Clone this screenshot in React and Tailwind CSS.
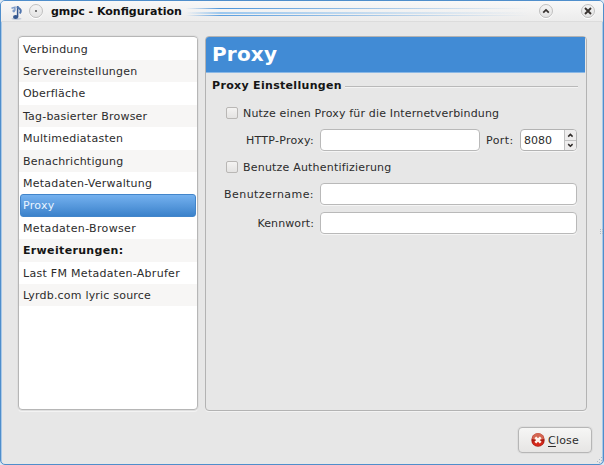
const items = [
  { label: "Verbindung", track: "tracking-[0.2px]" },
  { label: "Servereinstellungen", track: "tracking-[0.22px]" },
  { label: "Oberfläche", track: "tracking-[0.2px]" },
  { label: "Tag-basierter Browser", track: "tracking-[0.2px]" },
  { label: "Multimediatasten", track: "tracking-[0.27px]" },
  { label: "Benachrichtigung", track: "tracking-[0.22px]" },
  { label: "Metadaten-Verwaltung", track: "tracking-[0.24px]" },
  { label: "Proxy", track: "tracking-[0.3px]", selected: true },
  { label: "Metadaten-Browser", track: "tracking-[0.34px]" },
  { label: "Erweiterungen:", track: "tracking-[0.34px]", heading: true },
  { label: "Last FM Metadaten-Abrufer", track: "tracking-[0.29px]" },
  { label: "Lyrdb.com lyric source", track: "tracking-[0.2px]" },
];

function NoteIcon() {
  return (
    <svg className="ml-[9px] mt-[4px] h-[16px] w-[14px] shrink-0" viewBox="0 0 14 16">
      <ellipse cx="6.5" cy="13.8" rx="5" ry="1.1" fill="#c3ccda" />
      <path d="M7.6 12.2V1" fill="none" stroke="#34578f" strokeWidth="1.5" />
      <path d="M7.2 1.5c1 2 3.6 2.2 3.6 4.2 0 1.2-.4 2-1 2.8" fill="none" stroke="#4f74ad" strokeWidth="2" />
      <ellipse cx="5.6" cy="12" rx="2.6" ry="2" fill="#34578f" />
      <path d="M1.5 3.2l3.4-.9v3.4" fill="none" stroke="#7d9bc8" strokeWidth="1.5" />
      <circle cx="3.8" cy="6" r="1.4" fill="#7d9bc8" />
    </svg>
  );
}

function RoundButton({ children, className = "" }) {
  return (
    <span
      className={`flex h-[14px] w-[14px] shrink-0 items-center justify-center rounded-full border border-[#bfbfbf] bg-linear-to-b from-[#f4f4f4] to-[#e4e4e4] shadow-[0_1px_0_#ffffff] ${className}`}
    >
      {children}
    </span>
  );
}

function TitleBar() {
  return (
    <div className="flex h-[21px] shrink-0 border-b border-[#dcdcdc] bg-linear-to-b from-[#f8f8f8] to-[#ececec]">
      <NoteIcon />
      <RoundButton className="ml-[5px] mt-[3px]">
        <span className="h-[2px] w-[2px] bg-[#777777]" />
      </RoundButton>
      <span className="ml-[8px] mt-[2px] w-[132px] shrink-0 text-[11px] leading-[17px] font-bold text-[#111111]">
        gmpc - Konfiguration
      </span>
      <span className="ml-[3px] mt-[7px] flex flex-1 flex-col">
        <span className="h-px bg-linear-to-r from-transparent via-[#4b94da] via-10% to-transparent" />
        <span className="mt-[3px] h-[2px] bg-linear-to-r from-transparent via-[#9cc8ef] via-10% to-transparent" />
        <span className="mt-px h-px bg-linear-to-r from-transparent via-[#5b9fdf] via-10% to-transparent" />
      </span>
      <RoundButton className="ml-[10px] mt-[3px]">
        <svg className="h-[12px] w-[12px]" viewBox="0 0 12 12">
          <path d="M3.2 7.6L6 4.9l2.8 2.7" fill="none" stroke="#383330" strokeWidth="1.8" />
        </svg>
      </RoundButton>
      <RoundButton className="ml-[28px] mr-[8px] mt-[3px]">
        <svg className="h-[12px] w-[12px]" viewBox="0 0 12 12">
          <path d="M3 3l6 6M9 3l-6 6" fill="none" stroke="#383330" strokeWidth="1.9" />
        </svg>
      </RoundButton>
    </div>
  );
}

function Sidebar() {
  return (
    <div className="h-[374px] w-[180px] shrink-0 overflow-hidden rounded-[4px] border border-[#b6b6b6] bg-white pt-[0.6px] shadow-[0_0_0_1px_#dfdfdf,0_2px_0_#f3f3f3]">
      {items.map((item, i) => (
        <div
          key={item.label}
          className={`h-[22.4px] whitespace-nowrap ${item.track} ${
            item.selected
              ? "mx-px rounded-[3px] border border-[#4285ca] bg-linear-to-b from-[#74b1ef] to-[#3b82cb] pl-[2px] leading-[21px] text-[#e9f4ff]"
              : `pl-[4px] leading-[23px] ${i % 2 ? "bg-[#f7f6f5]" : "bg-white"}`
          } ${item.heading ? "font-bold text-[#151515]" : ""}`}
        >
          {item.label}
        </div>
      ))}
    </div>
  );
}

function Field({ className = "" }) {
  return (
    <span
      className={`block h-[22px] shrink-0 rounded-[4px] border border-[#b9b9b9] bg-white shadow-[0_1px_0_#f5f5f5] ${className}`}
    />
  );
}

function CheckRow({ label, track, className = "" }) {
  return (
    <div className={`flex h-[14px] items-center pl-[20px] ${className}`}>
      <span className="h-[12px] w-[12px] shrink-0 rounded-[2px] border border-[#b9b7b5] bg-linear-to-b from-[#f4f3f2] to-[#e4e3e2]" />
      <span className={`ml-[5px] pt-[2px] whitespace-nowrap ${track}`}>{label}</span>
    </div>
  );
}

function Spinner() {
  return (
    <span className="ml-[5px] flex h-[22px] w-[57px] shrink-0 overflow-hidden rounded-[4px] border border-[#b3b3b3] bg-white shadow-[0_1px_0_#f5f5f5]">
      <span className="w-[44px] pl-[3px] leading-[22px]">8080</span>
      <span className="flex flex-1 flex-col border-l border-[#c2c2c2] bg-[#eeeded]">
        <svg className="h-[20px] w-[11px]" viewBox="0 0 11 20">
          <path d="M0 10.5h11" stroke="#c2c2c2" />
          <path d="M3.2 6.6l2.2-2.2 2.2 2.2M3.2 14.1l2.2 2.2 2.2-2.2" fill="none" stroke="#2f2b29" strokeWidth="1.5" />
        </svg>
      </span>
    </span>
  );
}

function ProxyPanel() {
  return (
    <div className="h-[375px] w-[382px] shrink-0 rounded-[4px] border border-[#b3b3b3] shadow-[0_1px_0_#f3f3f3]">
      <div className="h-[36px] w-[379px] rounded-tl-[3px] border-b border-[#8ab8e6] bg-[#418bd5] pl-[6px] text-[20px] leading-[35px] font-bold tracking-[0.2px] text-white">
        Proxy
      </div>
      <div className="flex h-[26px] items-center pl-[6px]">
        <span className="shrink-0 font-bold tracking-[0.32px] text-[#151515]">Proxy Einstellungen</span>
        <span className="ml-[3px] mr-[8px] h-px flex-1 bg-[#b9b9b9] shadow-[0_1px_0_#f3f3f3]" />
      </div>
      <CheckRow label="Nutze einen Proxy für die Internetverbindung" track="tracking-[0.17px]" className="mt-[7px]" />
      <div className="mt-[9px] flex h-[22px] items-center">
        <span className="w-[108px] shrink-0 pt-[2px] text-right tracking-[0.28px]">HTTP-Proxy:</span>
        <Field className="ml-[6px] w-[160px]" />
        <span className="ml-[6px] w-[29px] shrink-0 pt-[2px] whitespace-nowrap tracking-[0.4px]">Port:</span>
        <Spinner />
      </div>
      <CheckRow label="Benutze Authentifizierung" track="tracking-[0.2px]" className="mt-[9px]" />
      <div className="mt-[9px] flex h-[22px] items-center">
        <span className="w-[108px] shrink-0 pt-[2px] text-right tracking-[0.43px]">Benutzername:</span>
        <Field className="ml-[6px] w-[257px]" />
      </div>
      <div className="mt-[7px] flex h-[22px] items-center">
        <span className="w-[108px] shrink-0 pt-[2px] text-right tracking-[0.1px]">Kennwort:</span>
        <Field className="ml-[6px] w-[257px]" />
      </div>
    </div>
  );
}

function CloseButton() {
  return (
    <div className="flex h-[26px] w-[74px] items-center rounded-[4px] border border-[#b6b6b6] bg-linear-to-b from-[#f6f6f5] to-[#e6e5e4] pl-[12px] shadow-[0_0_0_1px_#dedede]">
      <svg className="h-[14px] w-[14px] shrink-0" viewBox="0 0 14 14">
        <circle cx="7" cy="7" r="6.7" fill="#a81c14" />
        <path d="M1 6a6 6 0 0 1 12 0c-3 1-5 1-6 1s-3 0-6-1z" fill="#d46652" />
        <path d="M1.2 8.5a6 6 0 0 0 11.6 0z" fill="#d5281a" />
        <path d="M4.3 4.3l5.4 5.4M9.7 4.3l-5.4 5.4" stroke="#fff3ec" strokeWidth="2.5" />
      </svg>
      <span className="ml-[3px] pt-[2px] tracking-[0.2px]">
        <span className="underline underline-offset-2">C</span>lose
      </span>
    </div>
  );
}

export default function App() {
  return (
    <div className="h-[465px] w-[604px] overflow-hidden bg-[#dce8f3] font-['DejaVu_Sans',sans-serif] text-[11px] text-[#2c2c2c]">
      <div className="relative flex h-[465px] w-[604px] flex-col overflow-hidden rounded-[5px] border border-[#4f8ecb] bg-[#e7e7e7] shadow-[inset_1px_1px_0_#a9c9e8,inset_-1px_0_0_#a9c9e8]">
        <TitleBar />
        <div className="mt-[14px] flex pl-[17px]">
          <Sidebar />
          <div className="ml-[7px]">
            <ProxyPanel />
          </div>
        </div>
        <div className="mt-[16px] flex justify-end pr-[11px]">
          <CloseButton />
        </div>
        <div className="absolute right-0 top-[228px] grid grid-cols-2 gap-px">
          {[0, 1, 2, 3, 4, 5].map((dot) => (
            <span key={dot} className="h-px w-px bg-[#a9b7c6]" />
          ))}
        </div>
        <svg className="absolute bottom-0 right-0 h-[8px] w-[8px]" viewBox="0 0 8 8">
          <path d="M6 1h1v1H6zM4 3h1v1H4zM6 4h1v1H6zM2 5h1v1H2zM4 6h1v1H4z" fill="#a9b7c6" />
        </svg>
      </div>
    </div>
  );
}
